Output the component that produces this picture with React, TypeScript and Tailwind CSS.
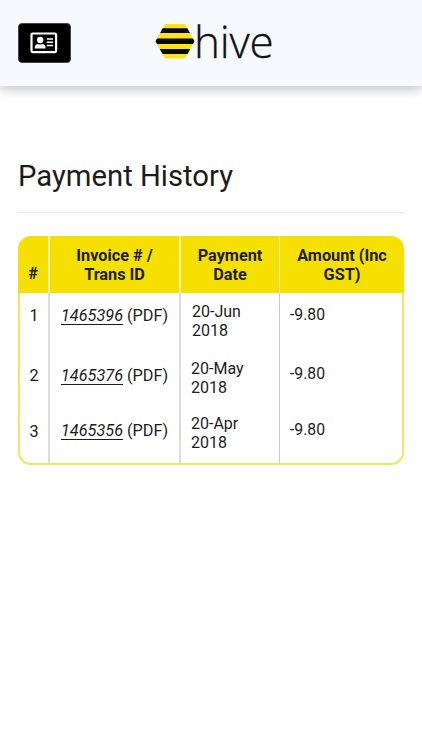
interface Payment {
    id: number;
    invoice: string;
    date: [string, string];
    amount: string;
    row: string;
    numberPad: string;
    invoicePad: string;
    datePad: string;
    amountPad: string;
}

const PAYMENTS: Payment[] = [
    { id: 1, invoice: "1465396", date: ["20-Jun", "2018"], amount: "-9.80", row: "h-[57px]", numberPad: "pt-[13px]", invoicePad: "pt-[13px]", datePad: "pt-[9px] pl-[11px]", amountPad: "pt-3" },
    { id: 2, invoice: "1465376", date: ["20-May", "2018"], amount: "-9.80", row: "h-14", numberPad: "pt-4", invoicePad: "pt-4", datePad: "pt-[9px] pl-[10px]", amountPad: "pt-[14px]" },
    { id: 3, invoice: "1465356", date: ["20-Apr", "2018"], amount: "-9.80", row: "h-[57px]", numberPad: "pt-4", invoicePad: "pt-[15px]", datePad: "pt-2 pl-[10px]", amountPad: "pt-[14px]" },
];

function CardIcon() {
    return (
        <svg className="-ml-[2px]" width="28" height="22" viewBox="0 0 28 22" fill="none">
            <rect x="1.5" y="1.5" width="24.6" height="18.6" rx="1.3" stroke="white" strokeWidth="2.2" />
            <circle cx="10.2" cy="8" r="3.2" fill="white" />
            <path d="M4.8 16.5v-1c0-2 1.4-3.5 3.2-3.5.7.5 1.4.6 2.2.6s1.4-.1 2.1-.6c1.8 0 3.3 1.5 3.3 3.5v1z" fill="white" />
            <path d="M16.8 7h6.2M16.8 10.3h6.2M16.8 13.5h6.2" stroke="white" strokeWidth="1.4" />
        </svg>
    );
}

function HiveLogo() {
    return (
        <div className="flex h-[37px] items-start">
            <svg className="mt-px" width="40" height="35" viewBox="0 0 40 35">
                <defs>
                    <clipPath id="cell">
                        <path d="M10 0h20l9.5 17.2L30 34.5H10L.5 17.2z" />
                    </clipPath>
                </defs>
                <g clipPath="url(#cell)">
                    <path d="M0 0h40v35H0z" fill="#fbe11f" />
                    <path d="M0 4.2h40v4.9H0zM0 14.6h40v5.4H0zM0 25h40v5H0z" fill="#080803" />
                </g>
            </svg>
            <span className="-ml-px -mt-[12px] font-['Open_Sans',sans-serif] text-[44px] leading-[60px] font-light tracking-[-0.2px] text-[#111] [-webkit-text-stroke:0.3px_#111]">
                hive
            </span>
        </div>
    );
}

export default function App() {
    return (
        <div className="min-h-[750px] bg-white font-[Roboto,sans-serif] text-[#1c1c1c]">
            <header className="flex h-[86px] items-start bg-[#f6fafe] pt-[23px] pl-[18px] shadow-[0_4px_10px_rgba(0,0,0,0.22)]">
                <button className="flex h-10 w-[53px] items-center justify-center rounded-[4px] border border-[#444] bg-black" aria-label="Account">
                    <CardIcon />
                </button>
                <div className="ml-[84px]">
                    <HiveLogo />
                </div>
            </header>

            <main className="px-[18px] pt-[70px]">
                <h1 className="border-b border-[#e8e8e8] pb-[15px] text-[29.25px] leading-[41px]">
                    Payment History
                </h1>

                <div className="mt-[23px] text-[16.25px] leading-[19px]">
                    <div className="grid h-[57px] grid-cols-[32px_131px_99px_1fr] rounded-t-[13px] bg-[#f5e000] text-center font-bold">
                        <div className="flex items-end justify-center border-r-2 border-[#f5efb0] pb-[10px]">#</div>
                        <div className="border-r-2 border-[#f5efb0] pt-[10px]">Invoice # /<br />Trans ID</div>
                        <div className="border-r border-[#f5efb0] pt-[10px]">Payment<br />Date</div>
                        <div className="pt-[10px]">Amount (Inc<br />GST)</div>
                    </div>
                    <div className="rounded-b-[13px] border-x-2 border-b-2 border-[#f3e45c]">
                        {PAYMENTS.map((payment) => (
                            <div key={payment.id} className={`grid grid-cols-[30px_131px_99px_1fr] ${payment.row}`}>
                                <div className={`border-r-2 border-[#dcdcdc] text-center ${payment.numberPad}`}>{payment.id}</div>
                                <div className={`border-r-2 border-[#dcdcdc] pl-[11px] whitespace-nowrap ${payment.invoicePad}`}>
                                    <a className="italic underline decoration-1 underline-offset-[3px]">{payment.invoice}</a> (PDF)
                                </div>
                                <div className={`border-r border-[#c8c8c8] text-[16px] leading-[19px] ${payment.datePad}`}>
                                    {payment.date[0]}<br />{payment.date[1]}
                                </div>
                                <div className={`pl-[10px] text-[15.75px] leading-[19px] ${payment.amountPad}`}>{payment.amount}</div>
                            </div>
                        ))}
                    </div>
                </div>
            </main>
        </div>
    );
}
